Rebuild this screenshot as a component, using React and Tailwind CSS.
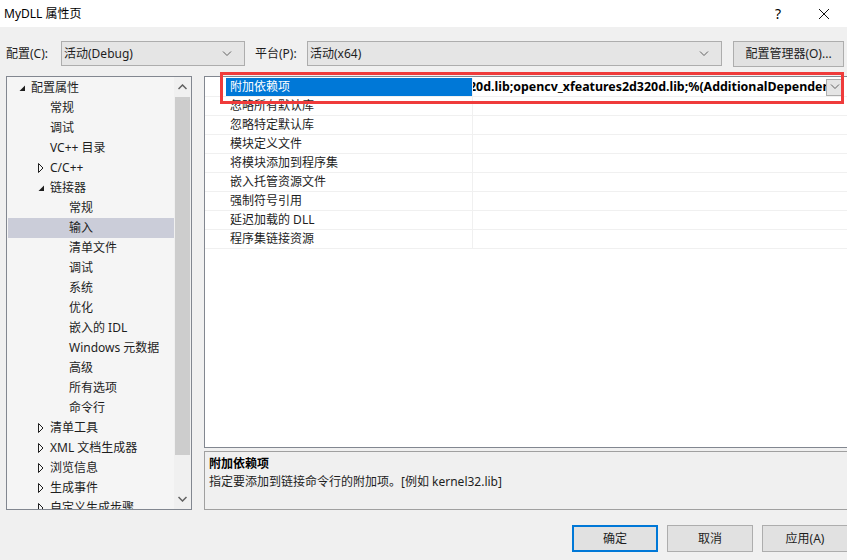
import React from 'react';

const FONT = "font-['Noto_Sans','Noto_Sans_CJK_SC',sans-serif]";

const treeItems = [
  { label: '配置属性', level: 0, icon: 'open' },
  { label: '常规', level: 1 },
  { label: '调试', level: 1 },
  { label: 'VC++ 目录', level: 1 },
  { label: 'C/C++', level: 1, icon: 'closed' },
  { label: '链接器', level: 1, icon: 'open' },
  { label: '常规', level: 2 },
  { label: '输入', level: 2, selected: true },
  { label: '清单文件', level: 2 },
  { label: '调试', level: 2 },
  { label: '系统', level: 2 },
  { label: '优化', level: 2 },
  { label: '嵌入的 IDL', level: 2 },
  { label: 'Windows 元数据', level: 2 },
  { label: '高级', level: 2 },
  { label: '所有选项', level: 2 },
  { label: '命令行', level: 2 },
  { label: '清单工具', level: 1, icon: 'closed' },
  { label: 'XML 文档生成器', level: 1, icon: 'closed' },
  { label: '浏览信息', level: 1, icon: 'closed' },
  { label: '生成事件', level: 1, icon: 'closed' },
  { label: '自定义生成步骤', level: 1, icon: 'closed' },
];

const props = [
  '附加依赖项',
  '忽略所有默认库',
  '忽略特定默认库',
  '模块定义文件',
  '将模块添加到程序集',
  '嵌入托管资源文件',
  '强制符号引用',
  '延迟加载的 DLL',
  '程序集链接资源',
];

const Chevron = ({ className = '' }) => (
  <svg width="10" height="6" viewBox="0 0 10 6" className={className}>
    <path d="M1 0.5 L5 4.5 L9 0.5" fill="none" stroke="#606060" strokeWidth="1" />
  </svg>
);

const TreeIcon = ({ type }) => {
  if (type === 'open') {
    return (
      <svg width="7" height="7" viewBox="0 0 7 7">
        <path d="M6 0.5 L6 6 L0.5 6 Z" fill="#1e1e1e" />
      </svg>
    );
  }
  if (type === 'closed') {
    return (
      <svg width="6" height="10" viewBox="0 0 6 10">
        <path d="M0.5 0.5 L5 5 L0.5 9.5 Z" fill="none" stroke="#1e1e1e" strokeWidth="1" />
      </svg>
    );
  }
  return null;
};

const ComboBox = ({ value, width }) => (
  <div className={`${width} shrink-0 h-[25px] bg-[#e5e5e5] border border-[#adadad] flex items-center justify-between pl-[2px] pr-[12px]`}>
    <span className="text-[12px]">{value}</span>
    <Chevron />
  </div>
);

const DialogButton = ({ label, primary }) => (
  <div
    className={`w-[86px] h-[27px] flex items-center justify-center text-[12px] bg-[#e1e1e1] ${
      primary ? 'border-2 border-[#0078d7]' : 'border border-[#adadad]'
    }`}
  >
    {label}
  </div>
);

export default function App() {
  return (
    <div className={`${FONT} w-[847px] h-[560px] bg-[#f0f0f0] text-[#1e1e1e] relative overflow-hidden`}>
      {/* title bar */}
      <div className="h-[27px] bg-white flex items-center justify-between pl-[4px]">
        <span className="text-[12px] text-black">MyDLL 属性页</span>
        <div className="flex items-center">
          <span className="w-[46px] text-center text-[14px] text-black">?</span>
          <svg width="46" height="12" viewBox="0 0 46 12">
            <path d="M18 1 L28 11 M28 1 L18 11" stroke="#111" strokeWidth="1" />
          </svg>
        </div>
      </div>

      {/* configuration row */}
      <div className="mt-[14px] h-[25px] flex items-center">
        <span className="ml-[6px] w-[55px] shrink-0 text-[12px]">配置(C):</span>
        <ComboBox value="活动(Debug)" width="w-[184px]" />
        <span className="ml-[10px] w-[52px] shrink-0 text-[12px]">平台(P):</span>
        <ComboBox value="活动(x64)" width="w-[415px]" />
        <div className="ml-[11px] w-[111px] shrink-0 h-[26px] bg-[#e1e1e1] border border-[#adadad] flex items-center justify-center text-[12px]">
          配置管理器(O)...
        </div>
      </div>

      {/* main area */}
      <div className="mt-[10px] flex h-[434px]">
        {/* tree */}
        <div className="ml-[6px] w-[186px] shrink-0 h-full border border-[#828790] bg-[#f5f5f5] flex overflow-hidden">
          <div className="flex-1 min-w-0 pt-[1px] overflow-hidden">
            {treeItems.map((item, i) => (
              <div
                key={i}
                className={`h-[20px] flex items-center ml-[1px] ${item.selected ? 'bg-[#cbcdd9]' : ''}`}
              >
                <div
                  className={`flex items-center justify-center w-[10px] shrink-0 ${
                    item.level === 0 ? 'ml-[9px]' : item.level === 1 ? 'ml-[28px]' : 'ml-[47px]'
                  }`}
                >
                  <TreeIcon type={item.icon} />
                </div>
                <span className="ml-[4px] text-[12px] whitespace-nowrap">{item.label}</span>
              </div>
            ))}
          </div>
          {/* scrollbar */}
          <div className="w-[17px] shrink-0 h-full bg-[#f0f0f0] flex flex-col">
            <div className="h-[20px] flex items-center justify-center">
              <svg width="9" height="6" viewBox="0 0 9 6">
                <path d="M0.5 5 L4.5 1 L8.5 5" fill="none" stroke="#606060" strokeWidth="1.5" />
              </svg>
            </div>
            <div className="h-[358px] mx-[1px] bg-[#cdcdcd]" />
            <div className="flex-1" />
            <div className="h-[20px] flex items-center justify-center">
              <svg width="9" height="6" viewBox="0 0 9 6">
                <path d="M0.5 1 L4.5 5 L8.5 1" fill="none" stroke="#606060" strokeWidth="1.5" />
              </svg>
            </div>
          </div>
        </div>

        {/* right column */}
        <div className="ml-[12px] flex-1 min-w-0 flex flex-col">
          {/* property grid */}
          <div className="h-[372px] border border-[#828790] border-r-0 bg-white pt-[1px] overflow-hidden">
            {props.map((p, i) => (
              <div key={i} className="h-[19px] flex border-b border-[#f0f0f0]">
                <div
                  className={`ml-[21px] w-[246px] shrink-0 flex items-center pl-[4px] text-[12px] whitespace-nowrap ${
                    i === 0 ? 'bg-[#0078d7] text-white' : ''
                  }`}
                >
                  {p}
                </div>
                <div className="flex-1 min-w-0 border-l border-[#f0f0f0] flex items-center overflow-hidden">
                  {i === 0 && (
                    <div className="flex-1 min-w-0 flex items-center overflow-hidden">
                      <div className="flex-1 min-w-0 overflow-hidden">
                        <span className="block -ml-[4px] text-[12.4px] font-bold text-black whitespace-nowrap">
                          20d.lib;opencv_xfeatures2d320d.lib;%(AdditionalDependencies)
                        </span>
                      </div>
                      <div className="mr-[4px] w-[17px] h-[17px] shrink-0 bg-[#e5e5e5] border border-[#adadad] flex items-center justify-center">
                        <Chevron />
                      </div>
                    </div>
                  )}
                </div>
              </div>
            ))}
          </div>

          {/* description */}
          <div className="mt-[3px] flex-1 border border-[#a0a0a0] border-r-0 bg-[#f0f0f0] px-[4px] pt-[3px]">
            <div className="text-[12px] font-bold leading-[18px] text-black">附加依赖项</div>
            <div className="text-[12px] leading-[18px]">指定要添加到链接命令行的附加项。[例如 kernel32.lib]</div>
          </div>
        </div>
      </div>

      {/* buttons */}
      <div className="mt-[15px] flex justify-end gap-[9px] -mr-[1px]">
        <DialogButton label="确定" primary />
        <DialogButton label="取消" />
        <DialogButton label="应用(A)" />
      </div>

      {/* red highlight */}
      <div className="absolute left-[220px] top-[72px] w-[624px] h-[32px] border-[3px] border-[#ef3b3b] pointer-events-none" />
    </div>
  );
}
